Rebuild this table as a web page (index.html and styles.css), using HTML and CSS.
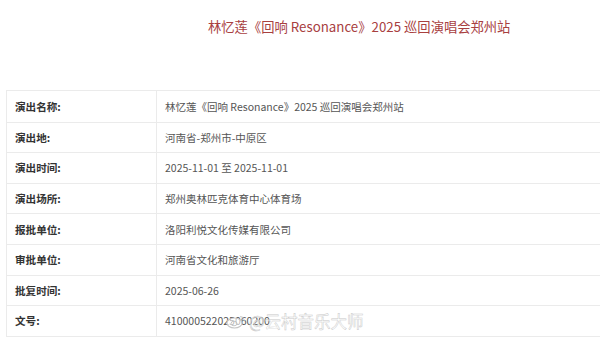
FILE: index.html
```html
<!DOCTYPE html>
<html lang="zh">
<head>
<meta charset="utf-8">
<link rel="stylesheet" href="styles.css">
</head>
<body>
<div class="page">
  <h1 class="title">林忆莲《回响 Resonance》2025 巡回演唱会郑州站</h1>
  <div class="table">
    <div class="row"><div class="label">演出名称:</div><div class="value">林忆莲《回响 Resonance》2025 巡回演唱会郑州站</div></div>
    <div class="row"><div class="label">演出地:</div><div class="value">河南省-郑州市-中原区</div></div>
    <div class="row"><div class="label">演出时间:</div><div class="value">2025-11-01 至 2025-11-01</div></div>
    <div class="row"><div class="label">演出场所:</div><div class="value">郑州奥林匹克体育中心体育场</div></div>
    <div class="row"><div class="label">报批单位:</div><div class="value">洛阳利悦文化传媒有限公司</div></div>
    <div class="row"><div class="label">审批单位:</div><div class="value">河南省文化和旅游厅</div></div>
    <div class="row"><div class="label">批复时间:</div><div class="value">2025-06-26</div></div>
    <div class="row"><div class="label">文号:</div><div class="value">410000522025060200</div></div>
  </div>
  <div class="watermark">
    <svg class="wb" width="20" height="16" viewBox="0 0 20 16">
      <ellipse cx="8.5" cy="10" rx="7.6" ry="5" fill="rgba(255,255,255,0.6)" stroke="#c4c4c4" stroke-width="1.1"/>
      <ellipse cx="8" cy="10.5" rx="3" ry="2.3" fill="none" stroke="#c4c4c4" stroke-width="1"/>
      <path d="M14 3.8a3.8 3.8 0 0 1 4.2 4.2" fill="none" stroke="#c4c4c4" stroke-width="1.1"/>
    </svg>
    <span class="wm-text">@云村音乐大师</span>
  </div>
</div>
</body>
</html>
```
FILE: styles.css
```css
html, body {
  margin: 0;
  padding: 0;
  background: #fff;
}
body {
  width: 600px;
  height: 341px;
  overflow: hidden;
  font-family: "Noto Sans CJK SC", "Noto Sans", sans-serif;
}
.page {
  position: relative;
  padding: 14px 0 0 6px;
}
.title {
  margin: 0;
  font-size: 13.3px;
  font-weight: 400;
  color: #a8403f;
  line-height: 26px;
  padding-left: 202px;
  white-space: nowrap;
}
.table {
  margin-top: 50px;
  border: 1px solid #ebebeb;
  border-right: none;
  width: 620px;
}
.row {
  display: flex;
  height: 30.6px;
  border-top: 1px solid #ebebeb;
  box-sizing: border-box;
  align-items: center;
}
.row:first-child {
  border-top: none;
}
.label {
  width: 150px;
  box-sizing: border-box;
  padding-left: 8px;
  font-size: 10.6px;
  font-weight: 700;
  color: #333;
  height: 100%;
  display: flex;
  align-items: center;
  border-right: 1px solid #ebebeb;
}
.value {
  padding-left: 8px;
  font-size: 10.5px;
  color: #555;
  white-space: nowrap;
}
.watermark {
  position: absolute;
  left: 226px;
  top: 311px;
  display: flex;
  align-items: center;
  gap: 3px;
}
.wm-text {
  font-size: 16.5px;
  line-height: 20px;
  color: rgba(255, 255, 255, 0.55);
  -webkit-text-stroke: 0.45px #c8c8c8;
}
.wb {
  display: block;
}
```
